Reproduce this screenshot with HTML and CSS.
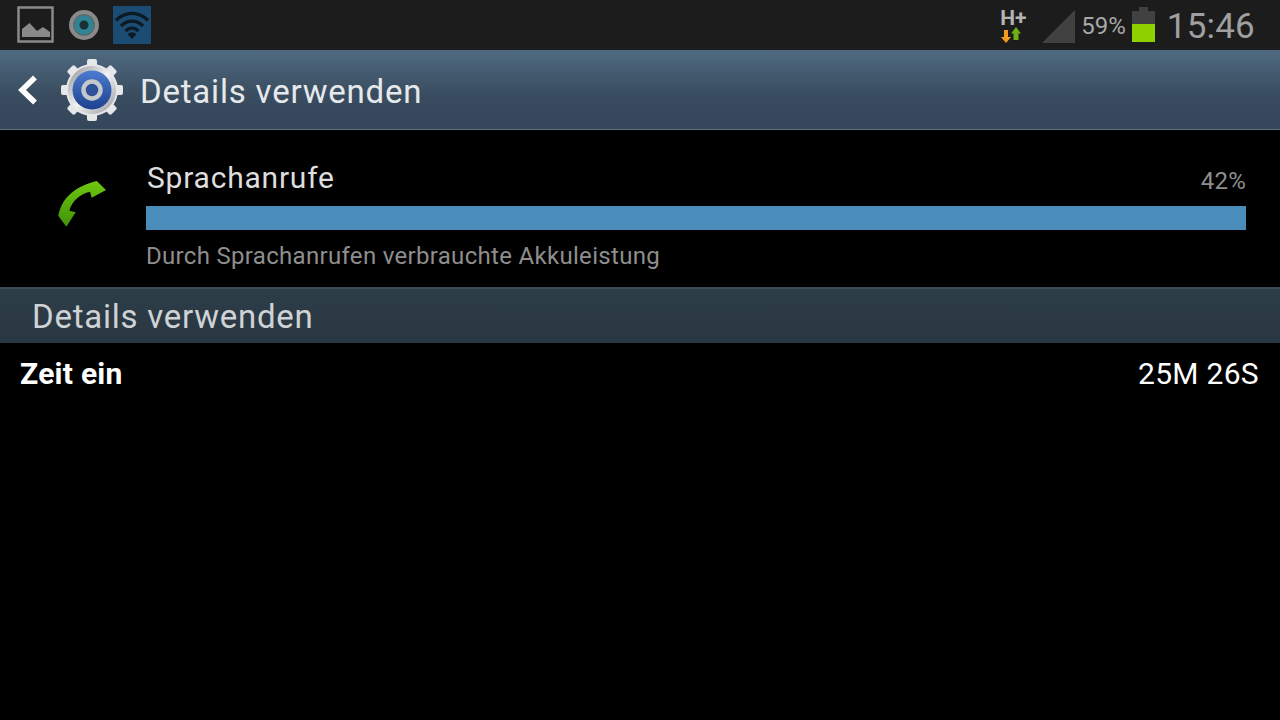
FILE: index.html
```html
<!DOCTYPE html>
<html>
<head>
<title>Details verwenden</title>
<link rel="stylesheet" href="styles.css">
</head>
<body>
<header class="statusbar">
  <div class="status-left">
    <svg class="ic-picture" width="38" height="38" viewBox="0 0 38 38">
      <rect x="1.500" y="1.500" width="34" height="34" fill="none" stroke="#8a8a8a" stroke-width="2.500"/>
      <path d="M5 31V23L12.500 17L20 25L26 21L33 26V31Z" fill="#8a8a8a"/>
    </svg>
    <svg class="ic-eye" width="32" height="32" viewBox="0 0 32 32">
      <circle cx="16" cy="16" r="15" fill="#8a8a8a"/>
      <circle cx="16" cy="16" r="11" fill="#5d6a6e"/>
      <circle cx="16" cy="16" r="9.500" fill="#2f8496"/>
      <circle cx="16" cy="16" r="4.500" fill="#1b2f36"/>
    </svg>
    <div class="ic-wifi">
      <svg width="38" height="38" viewBox="0 0 38 38">
        <path d="M3 14.500C12 5 26 5 35 14.500" fill="none" stroke="#0c1a24" stroke-width="3.400"/>
        <path d="M8 20C14.500 13.500 23.500 13.500 30 20" fill="none" stroke="#0c1a24" stroke-width="3.400"/>
        <path d="M12.500 25C16.500 21 21.500 21 25.500 25" fill="none" stroke="#0c1a24" stroke-width="3.200"/>
        <path d="M14.500 28Q19 24.500 23.500 28L19 33Z" fill="#0c1a24"/>
      </svg>
    </div>
  </div>
  <div class="status-right">
    <div class="net">
      <span class="net-label">H+</span>
      <svg width="22" height="17" viewBox="0 0 22 17">
        <path d="M3 3H7V10H10L5 16L0 10H3Z" fill="#f29a22"/>
        <path d="M15 0L20 6.500H17.500V13H12.500V6.500H10Z" fill="#6fb017"/>
      </svg>
    </div>
    <svg class="signal" width="33" height="33" viewBox="0 0 33 33"><path d="M33 0V33H0Z" fill="#414141"/></svg>
    <span class="pct">59%</span>
    <div class="battery"><div class="battery-cap"></div><div class="battery-body"><div class="battery-fill"></div></div></div>
    <span class="clock">15:46</span>
  </div>
</header>

<div class="actionbar">
  <svg class="back" width="24" height="34" viewBox="0 0 24 34">
    <path d="M21 4.500L8 17L21 29.500" fill="none" stroke="#fff" stroke-width="5.500"/>
  </svg>
  <svg class="gear" width="64" height="64" viewBox="0 0 64 64">
    <defs>
      <linearGradient id="blue" x1="0" y1="0" x2="0" y2="1">
        <stop offset="0" stop-color="#4d7cd0"/>
        <stop offset="1" stop-color="#1c418f"/>
      </linearGradient>
      <linearGradient id="steel" x1="0" y1="0" x2="1" y2="1">
        <stop offset="0" stop-color="#8f9296"/>
        <stop offset="0.5" stop-color="#f2f2f2"/>
        <stop offset="1" stop-color="#92959a"/>
      </linearGradient>
    </defs>
    <g fill="#e6e7e9">
      <circle cx="32" cy="32" r="26"/>
      <rect x="27" y="1" width="10" height="62" rx="2"/>
      <rect x="27" y="1" width="10" height="62" rx="2" transform="rotate(45 32 32)"/>
      <rect x="27" y="1" width="10" height="62" rx="2" transform="rotate(90 32 32)"/>
      <rect x="27" y="1" width="10" height="62" rx="2" transform="rotate(135 32 32)"/>
    </g>
    <circle cx="32" cy="32" r="24" fill="url(#steel)"/>
    <circle cx="32" cy="32" r="19.500" fill="url(#blue)"/>
    <circle cx="32" cy="32" r="8.500" fill="#2f5198" stroke="#c4c7cb" stroke-width="4.500"/>
  </svg>
  <h1 class="bar-title">Details verwenden</h1>
</div>

<section class="usage">
  <div class="usage-icon">
    <svg width="60" height="56" viewBox="0 0 60 56">
      <defs>
        <linearGradient id="green" x1="0" y1="0" x2="0" y2="1">
          <stop offset="0" stop-color="#6fc80f"/>
          <stop offset="1" stop-color="#3f9208"/>
        </linearGradient>
      </defs>
      <path d="M46.700 6L56 15L41.700 22.700L40 16.700C30 19 22 26 19.300 35.700L25.700 37.300L16.300 51.700L8.300 40.700C12 22 26 11 46.700 6Z" fill="url(#green)"/>
    </svg>
  </div>
  <div class="usage-main">
    <div class="usage-head">
      <span class="usage-name">Sprachanrufe</span>
      <span class="usage-pct">42%</span>
    </div>
    <div class="usage-bar"></div>
    <p class="usage-desc">Durch Sprachanrufen verbrauchte Akkuleistung</p>
  </div>
</section>

<h2 class="section-head">Details verwenden</h2>

<div class="row">
  <span class="row-label">Zeit ein</span>
  <span class="row-value">25M 26S</span>
</div>
</body>
</html>
```
FILE: styles.css
```css
* { box-sizing: border-box; }
html, body { margin: 0; padding: 0; }
body {
  width: 1280px;
  height: 720px;
  overflow: hidden;
  background: #000;
  font-family: Roboto, "Noto Sans", sans-serif;
  color: #e2e2e2;
}

.statusbar {
  height: 50px;
  background: #1c1c1c;
  display: flex;
  justify-content: space-between;
  align-items: center;
}
.status-left { display: flex; align-items: center; padding-left: 17px; }
.ic-eye { margin-left: 13px; }
.ic-wifi {
  margin-left: 13px;
  width: 38px;
  height: 38px;
  background: #1a4c74;
}
.ic-wifi svg { display: block; }

.status-right { display: flex; align-items: center; padding-right: 25px; }
.net { width: 26px; display: flex; flex-direction: column; align-items: flex-start; margin-right: 16px; margin-top: 3px; }
.net-label { font-size: 21px; font-weight: 700; line-height: 16px; color: #b4b4b4; }
.net svg { display: block; margin-top: 1px; margin-left: 1px; }
.signal { margin-right: 6px; margin-top: 2px; }
.pct { font-size: 24px; color: #a8a8a8; margin-right: 6px; padding-top: 1px; }
.battery { width: 24px; height: 35px; margin-right: 11px; margin-top: -1px; display: flex; flex-direction: column; align-items: center; }
.battery-cap { width: 9px; height: 4px; background: #414141; }
.battery-body { width: 23px; height: 31px; background: #414141; display: flex; align-items: flex-end; }
.battery-fill { width: 100%; height: 18px; background: #8fd100; }
.clock { font-size: 35px; color: #a0a0a0; letter-spacing: 0.2px; padding-top: 2px; }

.actionbar {
  height: 80px;
  background: linear-gradient(#4f6a80, #3a4d60 55%, #34465a);
  border-bottom: 1px solid #5f7280;
  display: flex;
  align-items: center;
  padding-left: 14px;
}
.back { margin-right: 22px; }
.gear { margin-right: 16px; }
.bar-title { margin: 0; padding-top: 4px; font-size: 33px; font-weight: 400; color: #e6e9ec; letter-spacing: 0.8px; }

.usage {
  height: 157px;
  display: flex;
}
.usage-icon { width: 146px; padding: 45px 0 0 50px; }
.usage-icon svg { display: block; }
.usage-main { width: 1100px; padding-top: 30px; }
.usage-head { display: flex; justify-content: space-between; align-items: flex-start; height: 46px; }
.usage-name { font-size: 30px; color: #dedede; padding-left: 1px; letter-spacing: 0.78px; }
.usage-pct { font-size: 24px; color: #8e8e8e; padding-top: 7px; letter-spacing: 0.2px; }
.usage-bar { height: 24px; background: #4a8cba; }
.usage-desc { margin: 12px 0 0; font-size: 24px; color: #8e8e8e; letter-spacing: 0.31px; }

.section-head {
  margin: 0;
  height: 56px;
  line-height: 56px;
  padding-left: 32px;
  border-top: 2px solid #3c4c56;
  font-size: 33px;
  font-weight: 400;
  color: #d0d3d5;
  background: linear-gradient(#2d3d48, #293742);
  letter-spacing: 0.75px;
}

.row { display: flex; justify-content: space-between; align-items: center; height: 60px; padding: 0 21px 0 20px; font-size: 30px; color: #fff; }
.row-label { font-weight: 700; letter-spacing: 0.25px; }
.row-value { letter-spacing: 0.3px; }
```
